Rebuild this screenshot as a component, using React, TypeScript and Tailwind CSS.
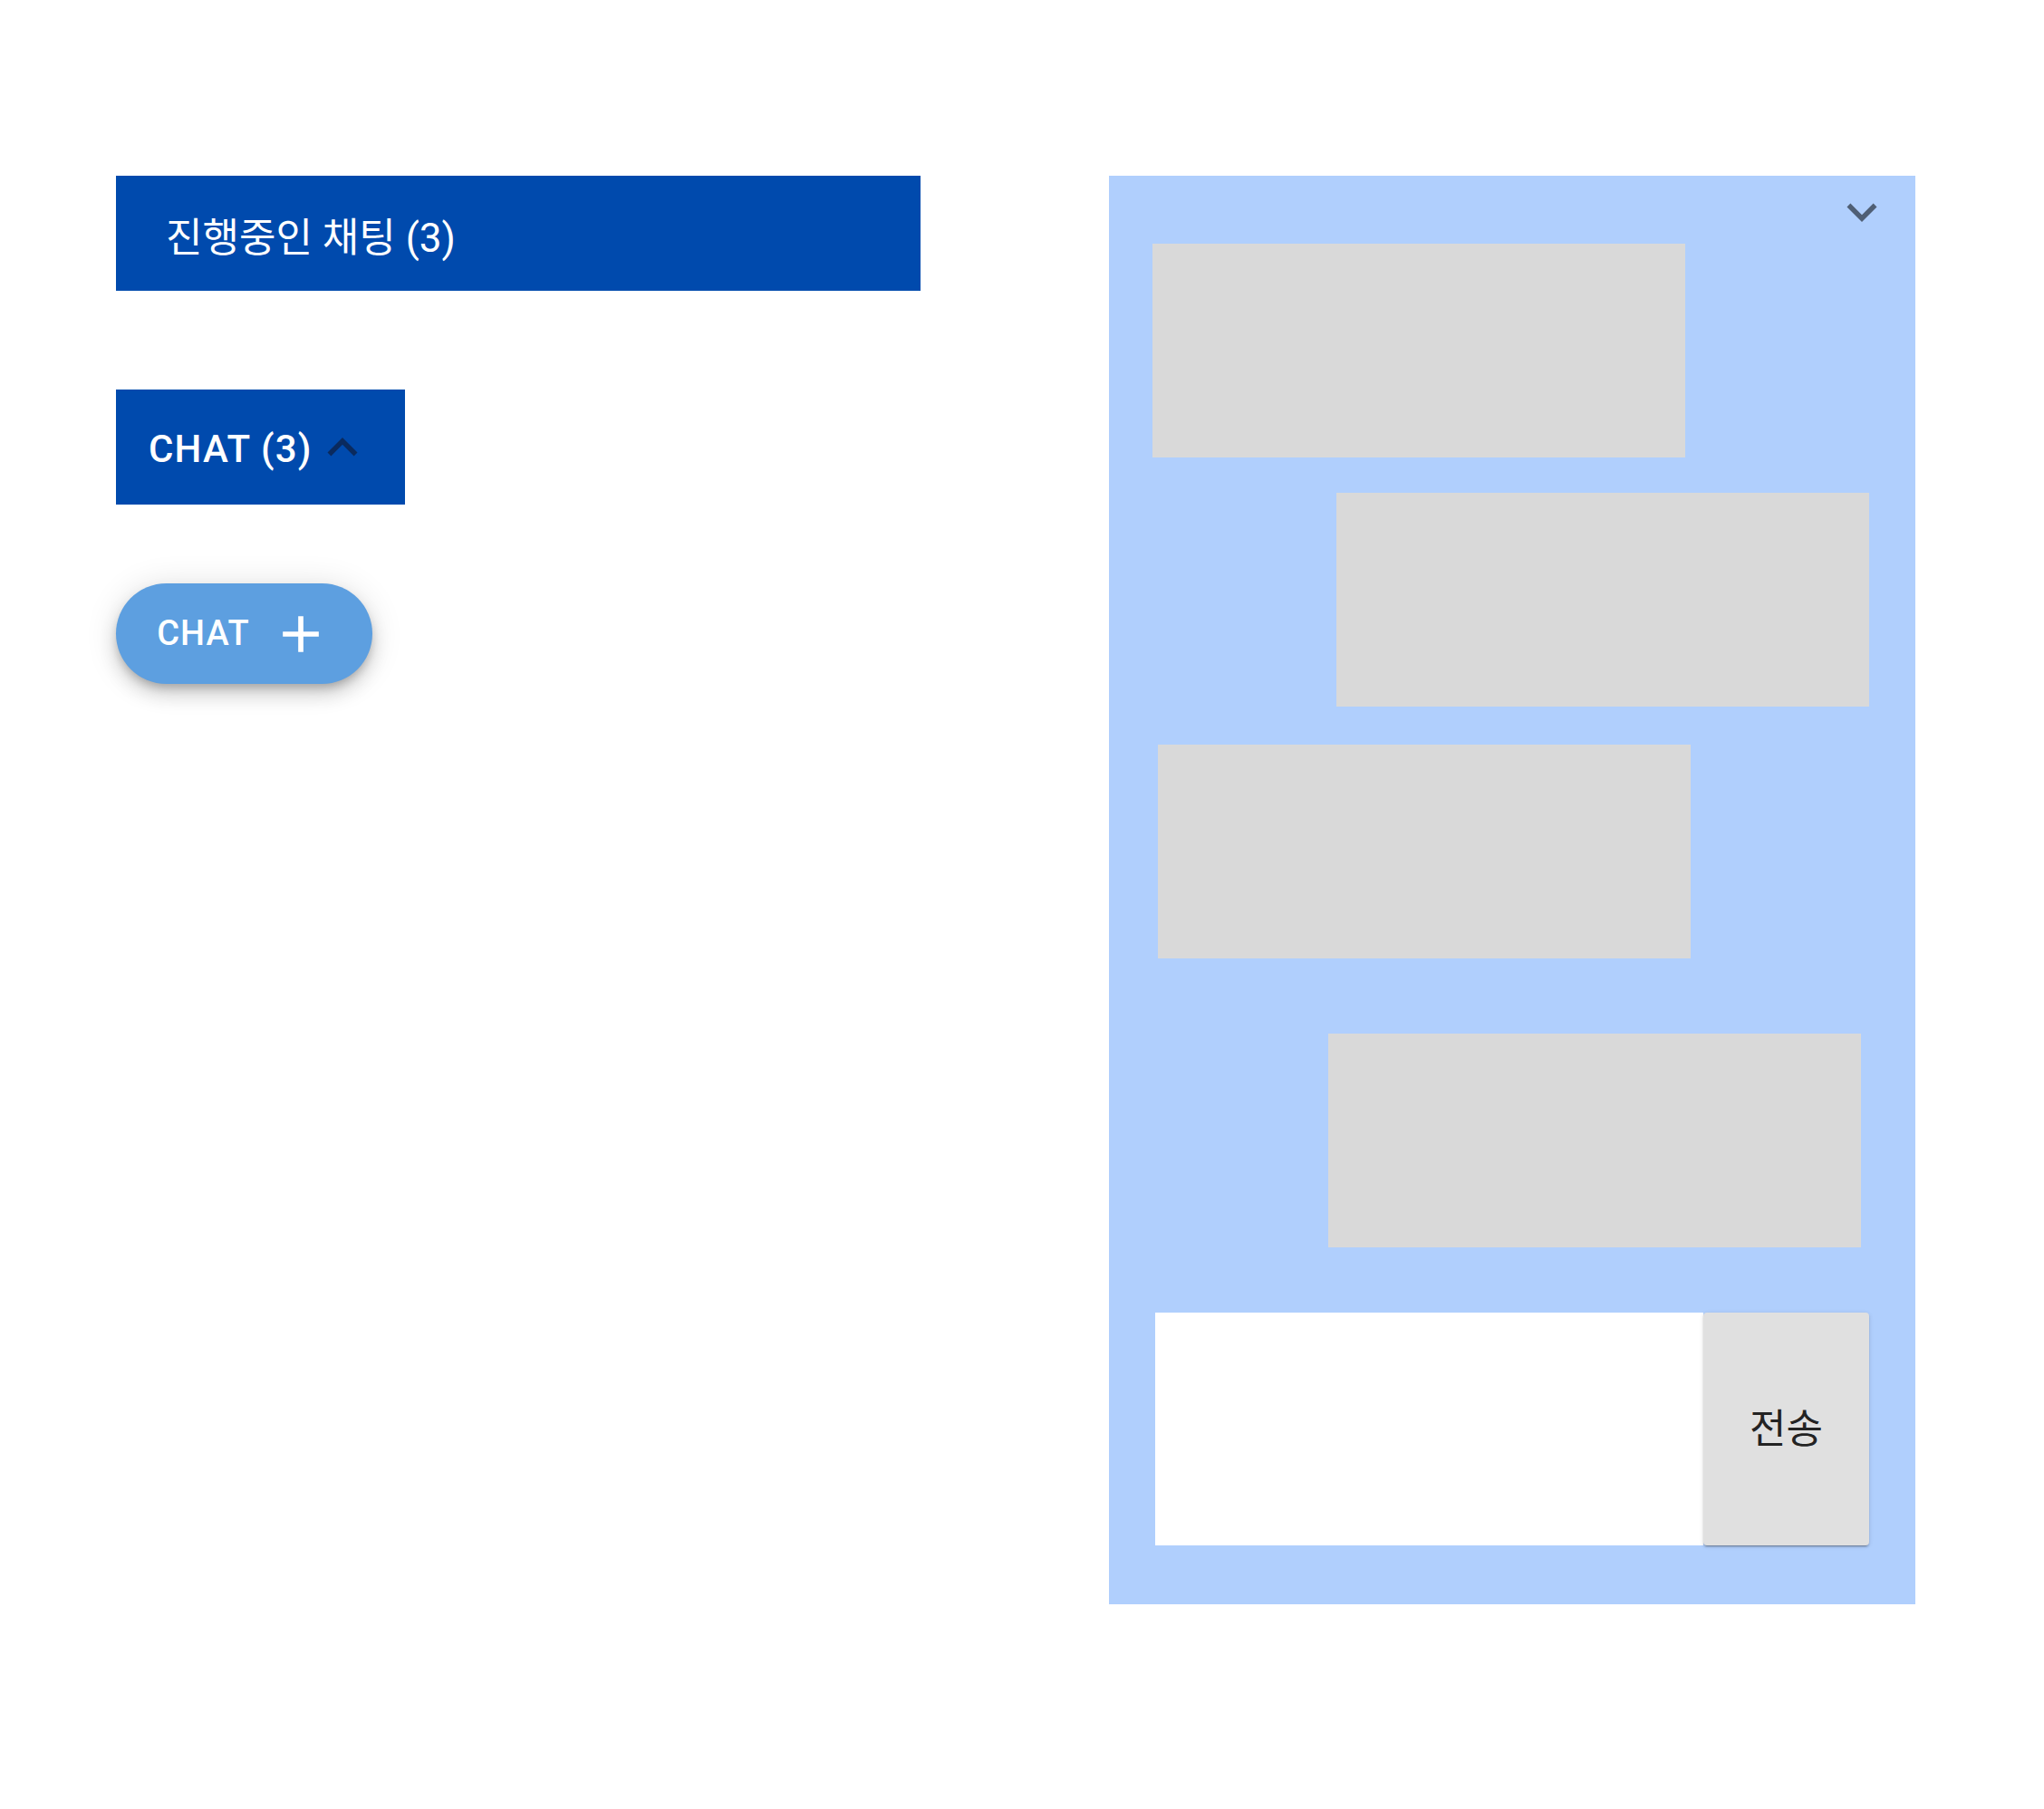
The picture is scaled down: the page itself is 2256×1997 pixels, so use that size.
import React from 'react';

const ExpandLess = ({ className }: { className?: string }) => (
  <svg viewBox="0 0 24 24" className={className} fill="currentColor">
    <path d="M12 8l-6 6 1.41 1.41L12 10.83l4.59 4.58L18 14z" />
  </svg>
);

const ExpandMore = ({ className }: { className?: string }) => (
  <svg viewBox="0 0 24 24" className={className} fill="currentColor">
    <path d="M16.59 8.59 12 13.17 7.41 8.59 6 10l6 6 6-6z" />
  </svg>
);

const AddIcon = ({ className }: { className?: string }) => (
  <svg viewBox="0 0 24 24" className={className} fill="currentColor">
    <path d="M19 13h-6v6h-2v-6H5v-2h6V5h2v6h6v2z" />
  </svg>
);

const bubbles = [
  { ml: 'ml-[48px]', mt: 'mt-[2px]' },
  { ml: 'ml-[251px]', mt: 'mt-[39px]' },
  { ml: 'ml-[54px]', mt: 'mt-[42px]' },
  { ml: 'ml-[242px]', mt: 'mt-[83px]' },
];

export default function App() {
  return (
    <div className="min-h-[1997px] w-full bg-white font-['Roboto','Noto_Sans_CJK_KR',sans-serif]">
      <div className="flex pl-[128px] pt-[194px]">
        {/* left column */}
        <div className="flex w-[888px] flex-col">
          <div className="flex h-[127px] w-[888px] items-center bg-[#004aad] pl-[55px] pt-[10px] text-[44px] leading-none text-white">
            진행중인 채팅 (3)
          </div>

          <button className="mt-[109px] flex h-[127px] w-[319px] items-center bg-[#004aad] pl-[36px] text-[42px] font-medium tracking-[0.02857em] text-white">
            <span className="pt-[4px]">CHAT (3)</span>
            <ExpandLess className="h-[66px] w-[66px] text-[#0a2a5e]" />
          </button>

          <button className="mt-[87px] flex h-[111px] w-[283px] items-center justify-center gap-[22px] rounded-full bg-[#5d9fe0] text-[38px] font-medium tracking-[0.03em] text-white shadow-[0_6px_10px_-2px_rgba(0,0,0,0.2),0_12px_20px_0_rgba(0,0,0,0.14),0_2px_36px_0_rgba(0,0,0,0.12)]">
            <span>CHAT</span>
            <AddIcon className="h-[68px] w-[68px]" />
          </button>
        </div>

        {/* chat panel */}
        <div className="ml-[208px] flex h-[1577px] w-[890px] flex-col bg-[#b0cffd] pt-[7px]">
          <div className="flex justify-end pr-[26px]">
            <ExpandMore className="h-[66px] w-[66px] text-[#4f5f75]" />
          </div>

          {bubbles.map((b, i) => (
            <div key={i} className={`${b.ml} ${b.mt} h-[236px] w-[588px] bg-[#d9d9d9]`} />
          ))}

          <div className="ml-[51px] mt-[72px] flex h-[257px] w-[788px]">
            <div className="flex-1 bg-white" />
            <button className="flex w-[183px] items-center justify-center rounded-[4px] bg-[#e0e0e0] text-[44px] text-[rgba(0,0,0,0.87)] shadow-[0_3px_1px_-2px_rgba(0,0,0,0.2),0_2px_2px_0_rgba(0,0,0,0.14),0_1px_5px_0_rgba(0,0,0,0.12)]">
              전송
            </button>
          </div>
        </div>
      </div>
    </div>
  );
}
